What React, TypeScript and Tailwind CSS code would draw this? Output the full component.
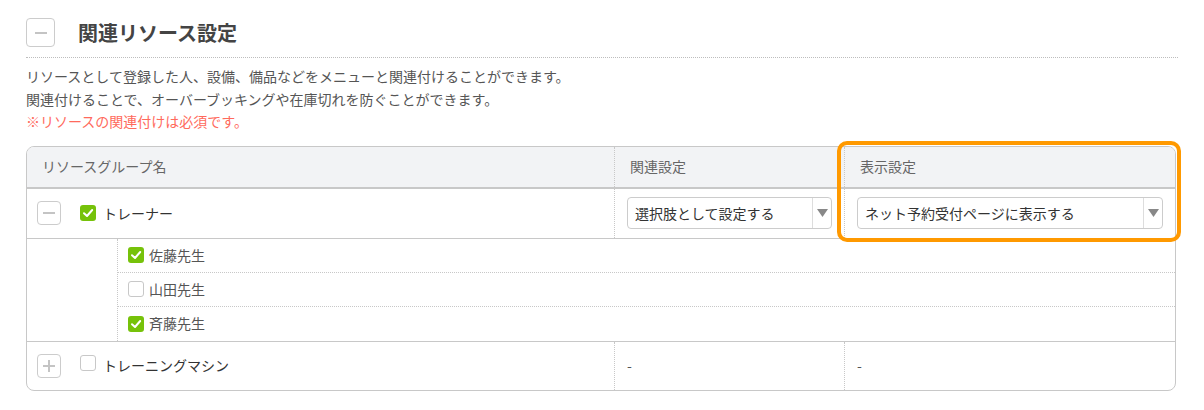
import { ReactNode } from "react";

const font = { fontFamily: '"Noto Sans CJK JP", "Noto Sans", sans-serif' };

function Check({ checked }: { checked: boolean }) {
  if (!checked) {
    return <span className="inline-block w-4 h-4 rounded-[3px] border border-[#c8c8c8] bg-white shrink-0" />;
  }
  return (
    <span className="inline-flex items-center justify-center w-4 h-4 rounded-[3px] bg-[#76c20a] shrink-0">
      <svg width="12" height="12" viewBox="0 0 12 12">
        <path d="M2 6.2 L5 9 L10.2 3" stroke="#fff" strokeWidth="2" fill="none" strokeLinecap="round" strokeLinejoin="round" />
      </svg>
    </span>
  );
}

function Toggle({ open, size = 24 }: { open: boolean; size?: number }) {
  return (
    <span
      className="inline-flex items-center justify-center rounded-[4px] border border-[#cccccc] bg-white shrink-0"
      style={{ width: size, height: size }}
    >
      <svg width="14" height="14" viewBox="0 0 14 14">
        <path d="M1 7 H13" stroke="#c4c4c4" strokeWidth="2" />
        {!open && <path d="M7 1 V13" stroke="#c4c4c4" strokeWidth="2" />}
      </svg>
    </span>
  );
}

function Select({ value }: { value: string }) {
  return (
    <div className="flex h-8 w-full items-stretch rounded-[4px] border border-[#cccccc] bg-white">
      <span className="flex-1 flex items-center pl-[7px] text-[14px] text-[#333]">{value}</span>
      <span className="w-[19px] flex items-center justify-center border-l border-[#dddddd]">
        <svg width="11" height="8" viewBox="0 0 11 8">
          <path d="M0 0 H11 L5.5 8 Z" fill="#888" />
        </svg>
      </span>
    </div>
  );
}

function Row({ c1, c2, c3, h }: { c1: ReactNode; c2: ReactNode; c3: ReactNode; h: string }) {
  return (
    <div className={`flex ${h}`}>
      <div className="w-[587px] flex items-center pl-[10px]">{c1}</div>
      <div className="w-[230px] flex items-center px-[12px] border-l border-dotted border-[#c8c8c8]">{c2}</div>
      <div className="flex-1 flex items-center px-[12px] border-l border-dotted border-[#c8c8c8]">{c3}</div>
    </div>
  );
}

const members = [
  { name: "佐藤先生", checked: true },
  { name: "山田先生", checked: false },
  { name: "斉藤先生", checked: true },
];

export default function App() {
  return (
    <div className="w-[1204px] h-[410px] bg-white pt-[18px] px-[26px] text-[#555]" style={font}>
      {/* Title */}
      <div className="flex items-center pb-[10px] border-b border-dotted border-[#bdbdbd]">
        <Toggle open size={29} />
        <h2 className="ml-[23px] text-[20px] font-bold text-[#444] leading-none">関連リソース設定</h2>
      </div>

      {/* Description */}
      <div className="mt-[7px] text-[14px] leading-[22.5px] text-[#555]">
        <p>リソースとして登録した人、設備、備品などをメニューと関連付けることができます。</p>
        <p>関連付けることで、オーバーブッキングや在庫切れを防ぐことができます。</p>
        <p className="text-[#ff6a5c]">※リソースの関連付けは必須です。</p>
      </div>

      {/* Table */}
      <div className="relative mt-[13px] w-[1150px]">
        <div className="border border-[#c8c8c8] rounded-[8px] overflow-hidden text-[14px]">
          <div className="flex h-[42px] bg-[#f2f3f5] border-b-2 border-[#c8c8c8] text-[#666]">
            <div className="w-[587px] flex items-center pl-[15px]">リソースグループ名</div>
            <div className="w-[230px] flex items-center pl-[15px] border-l border-dotted border-[#c8c8c8]">関連設定</div>
            <div className="flex-1 flex items-center pl-[15px] border-l border-dotted border-[#c8c8c8]">表示設定</div>
          </div>

          <div className="border-b border-[#c8c8c8]">
            <Row
              h="h-[49px]"
              c1={
                <div className="flex items-center text-[#333]">
                  <Toggle open />
                  <span className="ml-[19px]"><Check checked /></span>
                  <span className="ml-[7px]">トレーナー</span>
                </div>
              }
              c2={<Select value="選択肢として設定する" />}
              c3={<Select value="ネット予約受付ページに表示する" />}
            />
          </div>

          <div className="flex border-b border-[#c8c8c8]">
            <div className="w-[90px]" />
            <div className="flex-1 border-l border-dotted border-[#c8c8c8]">
              {members.map((m, i) => (
                <div
                  key={m.name}
                  className={`flex items-center h-[34px] pl-[10px] text-[#555] ${i < members.length - 1 ? "border-b border-dotted border-[#c8c8c8]" : ""}`}
                >
                  <Check checked={m.checked} />
                  <span className="ml-[5px]">{m.name}</span>
                </div>
              ))}
            </div>
          </div>

          <Row
            h="h-[48px]"
            c1={
              <div className="flex items-center text-[#333]">
                <Toggle open={false} />
                <span className="ml-[19px]"><Check checked={false} /></span>
                <span className="ml-[7px]">トレーニングマシン</span>
              </div>
            }
            c2={<span className="text-[#555]">-</span>}
            c3={<span className="text-[#555]">-</span>}
          />
        </div>

        {/* Highlight */}
        <div className="absolute left-[811px] top-[-5px] w-[344px] h-[101px] border-4 border-[#ff9900] rounded-[10px] pointer-events-none" />
      </div>
    </div>
  );
}
